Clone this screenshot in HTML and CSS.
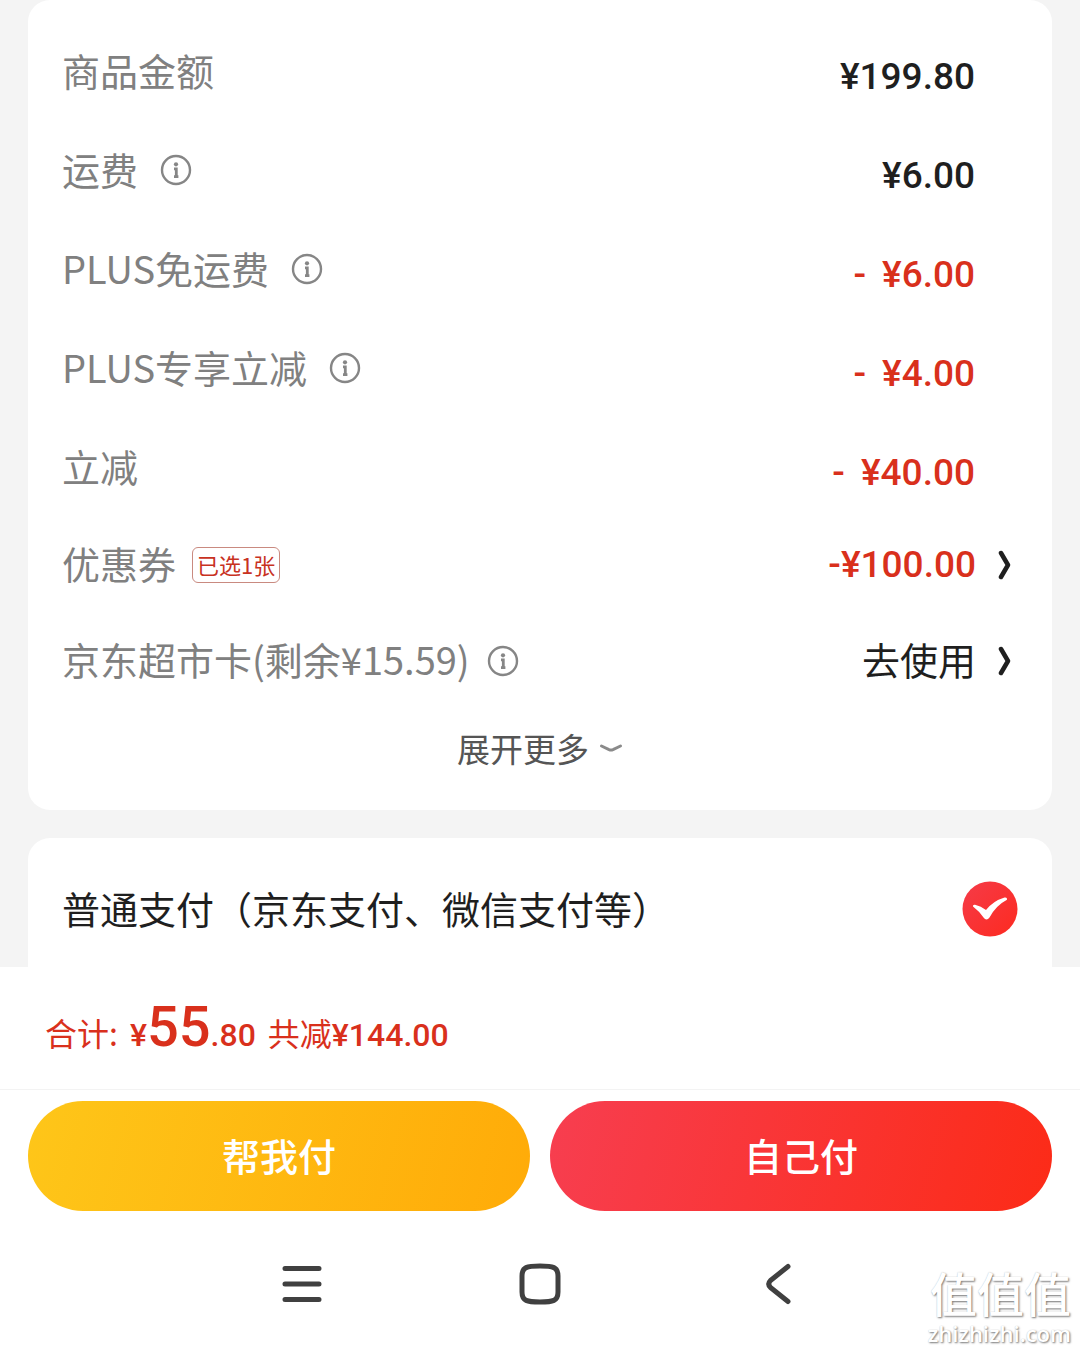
FILE: index.html
```html
<!DOCTYPE html>
<html lang="zh-CN">
<head>
    <meta charset="UTF-8">
    <meta name="viewport" content="width=device-width, initial-scale=1.0">
    <title>确认订单</title>
    <link rel="stylesheet" href="styles.css">
</head>
<body>
    <svg width="0" height="0" class="sprite" aria-hidden="true">
        <symbol id="info" viewBox="0 0 32 32">
            <circle cx="16" cy="16" r="14" fill="none" stroke="currentColor" stroke-width="2.4"/>
            <circle cx="16" cy="10.3" r="2.1" fill="currentColor"/>
            <path d="M14 14.8H16.300V22.600M14 22.600H18.400" fill="none" stroke="currentColor" stroke-width="2.8"/>
        </symbol>
        <symbol id="arrow" viewBox="0 0 14 30">
            <path d="M3 3L10 15L3 27" fill="none" stroke="currentColor" stroke-width="4.5" stroke-linecap="round" stroke-linejoin="round"/>
        </symbol>
    </svg>

    <main class="content">
        <section class="card summary">
            <div class="row">
                <span class="label">商品金额</span>
                <span class="price">¥199.80</span>
            </div>
            <div class="row">
                <span class="label">运费</span>
                <button class="info" aria-label="运费说明"><svg><use href="#info"/></svg></button>
                <span class="price">¥6.00</span>
            </div>
            <div class="row">
                <span class="label">PLUS免运费</span>
                <button class="info" aria-label="PLUS免运费说明"><svg><use href="#info"/></svg></button>
                <span class="price red"><span class="minus">-</span>¥6.00</span>
            </div>
            <div class="row">
                <span class="label">PLUS专享立减</span>
                <button class="info" aria-label="PLUS专享立减说明"><svg><use href="#info"/></svg></button>
                <span class="price red"><span class="minus">-</span>¥4.00</span>
            </div>
            <div class="row">
                <span class="label">立减</span>
                <span class="price red"><span class="minus">-</span>¥40.00</span>
            </div>
            <div class="row link-row">
                <span class="label">优惠券</span>
                <span class="tag">已选1张</span>
                <a class="price red" href="#coupon">-¥100.00<svg class="arrow"><use href="#arrow"/></svg></a>
            </div>
            <div class="row link-row">
                <span class="label">京东超市卡(剩余¥15.59)</span>
                <button class="info" aria-label="京东超市卡说明"><svg><use href="#info"/></svg></button>
                <a class="price use" href="#card"><span class="label-dark">去使用</span><svg class="arrow"><use href="#arrow"/></svg></a>
            </div>
            <button class="more"><span>展开更多</span>
                <svg viewBox="0 0 24 12"><path d="M2.500 4L10 7.600Q12 8.400 14 7.600L21.500 4" fill="none" stroke="#8a8a8a" stroke-width="3" stroke-linecap="round"/></svg>
            </button>
        </section>

        <section class="card">
            <label class="pay-type">
                <span class="pay-name">普通支付（京东支付、微信支付等）</span>
                <span class="tick">
                    <input type="radio" name="pay" checked>
                    <svg viewBox="0 0 56 56">
                        <defs>
                            <linearGradient id="tick-bg" x1="0" y1="0" x2="1" y2="1">
                                <stop offset="0" stop-color="#f53b48"/>
                                <stop offset="1" stop-color="#fd2a20"/>
                            </linearGradient>
                        </defs>
                        <circle cx="28" cy="28" r="27.5" fill="url(#tick-bg)"/>
                        <path d="M11 25.500Q10.500 23.500 13 23.800Q19 25 24 29Q31 20 42.500 16.500Q45.500 16 45 18.800Q34 24.500 27.500 36.500Q24.500 40.500 21.500 36.500Q17 30 11 25.500Z" fill="#fff"/>
                    </svg>
                </span>
            </label>
        </section>
    </main>

    <footer class="footer">
        <div class="total">
            <span>合计:</span>
            <strong class="sum"><span class="small">¥</span><span class="big">55</span><span class="small">.80</span></strong>
            <span>共减<strong class="small">¥144.00</strong></span>
        </div>
        <div class="actions">
            <button class="btn btn-yellow">帮我付</button>
            <button class="btn btn-red">自己付</button>
        </div>
        <nav class="nav">
            <button aria-label="菜单"><svg viewBox="0 0 44 44"><path d="M5 6.500H39M5 22H39M5 37.500H39" /></svg></button>
            <button aria-label="主页"><svg viewBox="0 0 44 44"><path d="M22 4C35 4 40 5 40 14V30C40 39 35 40 22 40S4 39 4 30V14C4 5 9 4 22 4Z" /></svg></button>
            <button aria-label="返回"><svg viewBox="0 0 44 44"><path d="M32 4.500L14.500 18.500Q11 22 14.500 25.500L32 39.500" /></svg></button>
        </nav>
    </footer>

    <div class="watermark">
        <span class="wm-name">值值值</span>
        <span class="wm-site">zhizhizhi.com</span>
    </div>
</body>
</html>
```
FILE: styles.css
```css
* { box-sizing: border-box; }
body { margin: 0; min-height: 100vh; display: flex; flex-direction: column; background-color: #f4f4f4; color: #1f1f1f; font-family: "Noto Sans CJK SC", sans-serif; font-size: 38px; }
button { padding: 0; border: 0; background: none; color: inherit; font: inherit; cursor: pointer; }
a { color: inherit; text-decoration: none; }
svg { display: block; }
.sprite { position: absolute; }

.content { flex: 1; padding: 0 28px; display: flex; flex-direction: column; gap: 28px; }
.card { background-color: #fff; border-radius: 22px; padding: 0 34px; }
.card:last-child { flex: 1; border-radius: 22px 22px 0 0; }
.summary { padding-top: 22px; padding-bottom: 23px; }

.row { display: flex; align-items: center; height: 99px; line-height: 56px; }
.link-row { height: 96px; }
.label, .label-dark, .pay-name { padding-bottom: 4px; white-space: nowrap; }
.label { color: #808080; }
.info { margin-left: 22px; padding-bottom: 2px; color: #868686; }
.link-row .info { margin-left: 17px; padding: 0; }
.info svg { width: 32px; height: 32px; }
.price { display: flex; align-items: center; margin-left: auto; padding: 10px 43px 0 0; font-family: Roboto, "Noto Sans CJK SC", sans-serif; font-size: 37px; font-weight: 500; white-space: nowrap; }
.link-row .price { padding: 0; }
.link-row .use { font-family: "Noto Sans CJK SC", sans-serif; font-size: 38px; font-weight: 400; }
.minus { margin-right: 16px; }
.red { color: #d9301c; }
.arrow { width: 14px; height: 30px; margin: 0 6px 0 22px; color: #1f1f1f; }
.tag { margin-left: 16px; padding: 0 4px 2px; border: 1px solid #c98a80; border-radius: 6px; color: #c8321f; font-size: 22px; line-height: 32px; }
.more { display: flex; align-items: center; justify-content: center; gap: 10px; width: 100%; height: 78px; color: #555; font-size: 33px; }
.more svg { width: 24px; height: 12px; }

.pay-type { display: flex; align-items: center; justify-content: space-between; height: 129px; padding-top: 13px; white-space: nowrap; }
.tick { display: grid; width: 56px; height: 56px; }
.tick input, .tick svg { grid-area: 1 / 1; width: 56px; height: 56px; margin: 0; }
.tick input { appearance: none; }

.footer { background-color: #fff; }
.total { display: flex; align-items: baseline; gap: 12px; height: 123px; padding: 20px 45px 0; border-bottom: 1px solid #f3f3f3; color: #d9301c; font-size: 32px; line-height: 80px; white-space: nowrap; }
.total strong { font-family: Roboto, sans-serif; font-weight: 500; }
.total .small { font-size: 32px; }
.total .big { font-size: 56px; }
.actions { display: flex; gap: 20px; padding: 11px 28px 0; }
.btn { flex: 1; height: 110px; padding-bottom: 4px; border-radius: 55px; color: #fff; font-weight: 500; }
.btn-yellow { background: linear-gradient(105deg, #fec619, #ffab08); }
.btn-red { background: linear-gradient(105deg, #f73e50, #fc2b17); }
.nav { display: flex; justify-content: center; align-items: flex-start; gap: 194px; height: 141px; padding-top: 51px; }
.nav svg { width: 44px; height: 44px; fill: none; stroke: #404040; stroke-width: 5; stroke-linecap: round; stroke-linejoin: round; }

.watermark { position: absolute; right: 9px; bottom: 4px; display: flex; flex-direction: column; align-items: flex-end; color: #fff; text-shadow: 1px 1px 2px #777, 0 0 1px #ccc; }
.wm-name { font-size: 47px; font-weight: 500; line-height: 52px; }
.wm-site { font-family: "Open Sans", sans-serif; font-size: 22px; font-weight: 600; line-height: 30px; }
```
